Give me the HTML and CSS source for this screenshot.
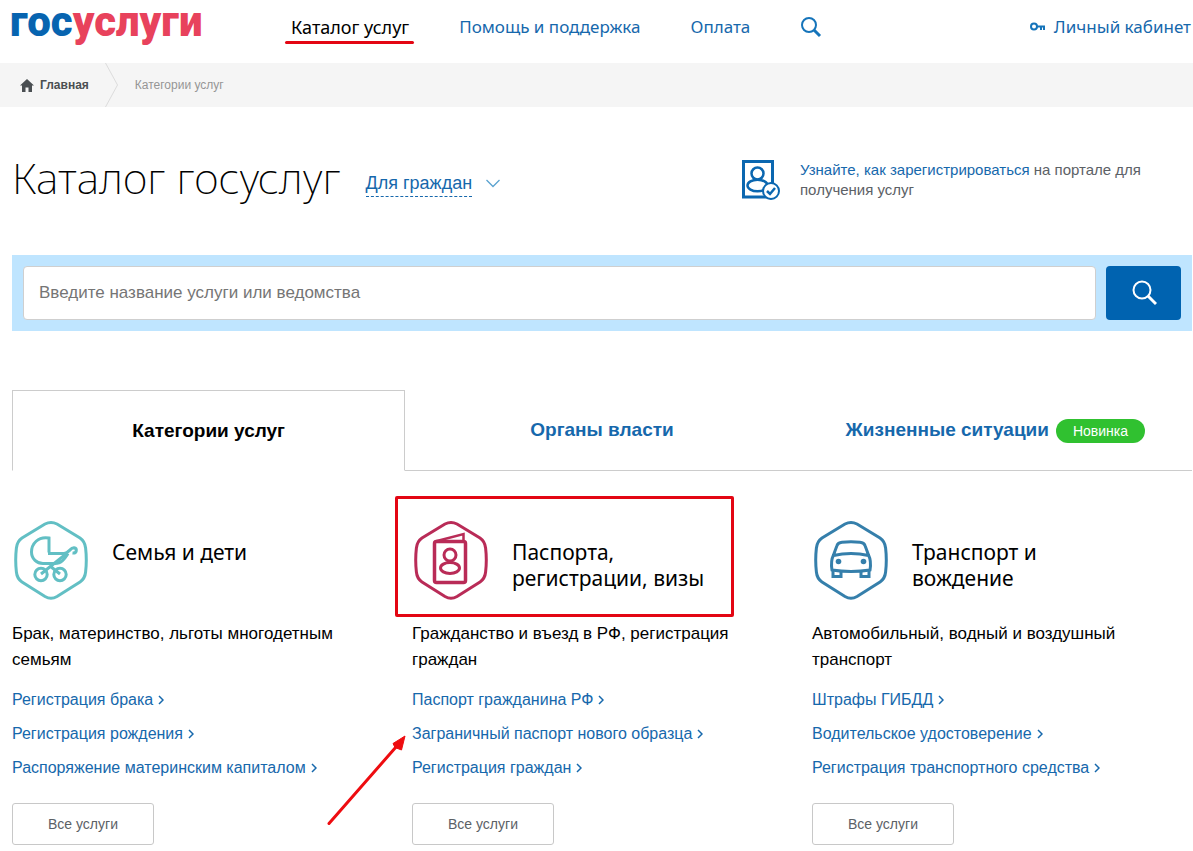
FILE: index.html
```html
<!DOCTYPE html>
<html lang="ru">
<head>
<meta charset="utf-8">
<meta name="viewport" content="width=device-width, initial-scale=1">
<title>Каталог госуслуг</title>
<link rel="stylesheet" href="styles.css">
</head>
<body>
<header class="header">
  <a class="logo" href="#"><span class="logo-blue">гос</span>услуги</a>
  <nav class="nav">
    <a class="nav-link nav-active" href="#">Каталог услуг</a>
    <a class="nav-link" href="#">Помощь и поддержка</a>
    <a class="nav-link" href="#">Оплата</a>
    <button class="nav-search" type="button" aria-label="Поиск">
      <svg width="22" height="22" viewBox="0 0 22 22" fill="none" stroke="#1574ba"><circle cx="9" cy="9" r="7" stroke-width="2"/><path d="M14 14l6 6" stroke-width="3"/></svg>
    </button>
  </nav>
  <a class="account" href="#">
    <svg width="16" height="10" viewBox="0 0 16 10" fill="none" stroke="#1574ba" stroke-width="2"><circle cx="4" cy="4.500" r="3"/><path d="M7 4.500h8M11 5v3M14 5v3"/></svg>
    Личный кабинет
  </a>
</header>

<nav class="crumbs" aria-label="Навигация">
  <a class="crumb-home" href="#">
    <svg width="14" height="13" viewBox="0 0 14 13" fill="#4a4f52"><path d="M7 0l7 6.600h-2V13H8.500V8.500h-3V13H2V6.600H0z"/></svg>
    Главная
  </a>
  <svg class="crumb-sep" width="14" height="44" viewBox="0 0 14 44" fill="none" stroke="#dcdcdc"><path d="M.5 0l12 22-12 22"/></svg>
  <span>Категории услуг</span>
</nav>

<main class="main">
  <div class="title-row">
    <h1 class="title">Каталог госуслуг</h1>
    <button class="audience" type="button">
      <span class="audience-text">Для граждан</span>
      <svg width="14" height="9" viewBox="0 0 14 9" fill="none" stroke="#5ba3d0" stroke-width="1.300"><path d="M.5 1L7 7.500 13.500 1"/></svg>
    </button>
    <div class="register">
      <svg width="38" height="40" viewBox="0 0 38 40" fill="none" stroke="#0b67b0" stroke-width="2.500">
        <rect x="1.500" y="1.500" width="29" height="35.500" stroke-width="3"/>
        <circle cx="15.500" cy="13.500" r="6"/>
        <ellipse cx="15.500" cy="25.500" rx="10" ry="5.800"/>
        <circle cx="29" cy="31" r="8" fill="#fff" stroke-width="2"/>
        <path d="M25 31l3 3 5-6"/>
      </svg>
      <p class="register-text"><a href="#">Узнайте, как зарегистрироваться</a> на портале для получения услуг</p>
    </div>
  </div>

  <form class="search">
    <input class="search-input" type="text" placeholder="Введите название услуги или ведомства" aria-label="Введите название услуги или ведомства">
    <button class="search-button" type="button" aria-label="Найти">
      <svg width="26" height="26" viewBox="0 0 26 26" fill="none" stroke="#fff"><circle cx="11" cy="10" r="8.500" stroke-width="2"/><path d="M17 16l8 8" stroke-width="3"/></svg>
    </button>
  </form>

  <div class="tabs">
    <a class="tab tab-active" href="#">Категории услуг</a>
    <a class="tab" href="#">Органы власти</a>
    <a class="tab" href="#">Жизненные ситуации <span class="badge">Новинка</span></a>
  </div>

  <div class="categories">
    <section class="category">
      <div class="category-head">
        <svg class="category-icon" width="80" height="80" viewBox="1 0 80 80" fill="none" stroke="#62bfc4" stroke-width="3">
          <path d="M34 4Q40 .800 46 4L69 18Q74 21.500 74.600 28Q76 40 74.600 52Q74 58.500 69 62L46 76.500Q40 80 34 76.500L11 62Q6 58.500 5.400 52Q4 40 5.400 28Q6 21.500 11 18Z"/>
          <path d="M38 32.500V18C27 16 20.500 24 20.500 32C20.500 39 26 43.500 32 43.500H44C51 43.500 54 38 57 33.500"/>
          <path d="M37 33.500H53C58 33.500 59 27.500 63 27.800C66.500 28.500 66 33.500 61.500 33"/>
          <path d="M30 54L55 34M39 46L49 54"/>
          <circle cx="30" cy="54.500" r="6.200"/><circle cx="49" cy="54.500" r="6.200"/>
        </svg>
        <h2 class="category-title">Семья и дети</h2>
      </div>
      <p class="category-text">Брак, материнство, льготы многодетным семьям</p>
      <ul class="links">
        <li><a href="#">Регистрация брака<svg class="chev" width="6" height="10" viewBox="0 0 6 10"><path d="M1 1l4 4-4 4"/></svg></a></li>
        <li><a href="#">Регистрация рождения<svg class="chev" width="6" height="10" viewBox="0 0 6 10"><path d="M1 1l4 4-4 4"/></svg></a></li>
        <li><a href="#">Распоряжение материнским капиталом<svg class="chev" width="6" height="10" viewBox="0 0 6 10"><path d="M1 1l4 4-4 4"/></svg></a></li>
      </ul>
      <button class="all" type="button">Все услуги</button>
    </section>

    <section class="category">
      <div class="category-head marked">
        <svg class="category-icon" width="80" height="80" viewBox="1 0 80 80" fill="none" stroke="#b92b57" stroke-width="3">
          <path d="M34 4Q40 .800 46 4L69 18Q74 21.500 74.600 28Q76 40 74.600 52Q74 58.500 69 62L46 76.500Q40 80 34 76.500L11 62Q6 58.500 5.400 52Q4 40 5.400 28Q6 21.500 11 18Z"/>
          <rect x="23.500" y="21.500" width="31" height="41" rx="2" stroke-width="3.500"/>
          <path d="M24 21.500L52.500 14V22" stroke-width="2.500"/>
          <circle cx="39" cy="35" r="6"/><ellipse cx="39" cy="48" rx="9.500" ry="5.500"/>
        </svg>
        <h2 class="category-title">Паспорта, регистрации, визы</h2>
      </div>
      <p class="category-text">Гражданство и въезд в РФ, регистрация граждан</p>
      <ul class="links">
        <li><a href="#">Паспорт гражданина РФ<svg class="chev" width="6" height="10" viewBox="0 0 6 10"><path d="M1 1l4 4-4 4"/></svg></a></li>
        <li class="pointed"><a href="#">Заграничный паспорт нового образца<svg class="chev" width="6" height="10" viewBox="0 0 6 10"><path d="M1 1l4 4-4 4"/></svg></a>
          <svg class="arrow" width="80" height="92" viewBox="0 0 80 92"><path d="M2 88.500L69 12" stroke="#ee0c10" stroke-width="3" stroke-linecap="round"/><path d="M78 1L66 8.500 68 12.500 74.500 15z" fill="#ee0c10" stroke="#ee0c10"/></svg></li>
        <li><a href="#">Регистрация граждан<svg class="chev" width="6" height="10" viewBox="0 0 6 10"><path d="M1 1l4 4-4 4"/></svg></a></li>
      </ul>
      <button class="all" type="button">Все услуги</button>
    </section>

    <section class="category">
      <div class="category-head">
        <svg class="category-icon" width="80" height="80" viewBox="1 0 80 80" fill="none" stroke="#357fab" stroke-width="3">
          <path d="M34 4Q40 .800 46 4L69 18Q74 21.500 74.600 28Q76 40 74.600 52Q74 58.500 69 62L46 76.500Q40 80 34 76.500L11 62Q6 58.500 5.400 52Q4 40 5.400 28Q6 21.500 11 18Z"/>
          <path d="M22.500 35L26 25.500Q27 22.500 31 22.200Q40 21.500 49 22.200Q53 22.500 54 25.500L57.500 35Q60.500 41 59 50Q40 53 21 50Q19.500 41 22.500 35ZM22.500 35.500Q40 31.500 57.500 35.500"/>
          <path d="M22 50V56.500H30V51M50 51V56.500H58V50"/>
          <circle cx="27.500" cy="41.500" r="2.800" fill="#357fab" stroke="none"/><circle cx="52.500" cy="41.500" r="2.800" fill="#357fab" stroke="none"/>
        </svg>
        <h2 class="category-title">Транспорт и вождение</h2>
      </div>
      <p class="category-text">Автомобильный, водный и воздушный транспорт</p>
      <ul class="links">
        <li><a href="#">Штрафы ГИБДД<svg class="chev" width="6" height="10" viewBox="0 0 6 10"><path d="M1 1l4 4-4 4"/></svg></a></li>
        <li><a href="#">Водительское удостоверение<svg class="chev" width="6" height="10" viewBox="0 0 6 10"><path d="M1 1l4 4-4 4"/></svg></a></li>
        <li><a href="#">Регистрация транспортного средства<svg class="chev" width="6" height="10" viewBox="0 0 6 10"><path d="M1 1l4 4-4 4"/></svg></a></li>
      </ul>
      <button class="all" type="button">Все услуги</button>
    </section>
  </div>
</main>
</body>
</html>
```
FILE: styles.css
```css
*, *::after { box-sizing: border-box; }
body {
  margin: 0;
  background: #fff;
  color: #000;
  font: 16px/26px "Liberation Sans", Arial, sans-serif;
}
a { color: #1668ac; text-decoration: none; }
button { border: 0; padding: 0; background: none; font: inherit; cursor: pointer; }
svg { display: block; flex: none; }
h1, h2, p, ul { margin: 0; padding: 0; font-weight: normal; }
ul { list-style: none; }

.header {
  display: flex;
  align-items: center;
  height: 63px;
  padding: 0 2px 9px 10px;
  font: 17px/26px "Noto Sans", "Open Sans", sans-serif;
}
.logo {
  width: 281px;
  color: #e8425c;
  font: 900 42px/48px Roboto, "Noto Sans", sans-serif;
  padding-bottom: 10px;
}
.logo-blue { color: #0764b0; }
.nav { display: flex; align-items: center; gap: 50px; }
.nav-active { position: relative; color: #000; font-size: 18px; }
.nav-active::after {
  content: "";
  position: absolute;
  left: -6px;
  right: -5px;
  bottom: -4px;
  height: 3px;
  border-radius: 2px;
  background: #e30613;
}
.account { display: flex; align-items: center; gap: 8px; margin-left: auto; }

.crumbs {
  display: flex;
  align-items: center;
  gap: 16px;
  height: 44px;
  padding-left: 20px;
  background: #f5f5f5;
  color: #959595;
  font-size: 12px;
}
.crumb-home {
  display: flex;
  align-items: center;
  gap: 6px;
  color: #4a4f52;
  font-weight: bold;
}

.main { padding: 48px 1px 0 12px; }
.title-row { display: flex; align-items: center; height: 50px; }
.title { font: 200 43px/46px "Noto Sans", Roboto, sans-serif; padding-bottom: 4px; }
.audience {
  display: flex;
  align-items: center;
  gap: 14px;
  margin-left: 25px;
  padding-top: 6px;
  color: #1668ac;
  font-size: 18px;
}
.audience-text { border-bottom: 1px dashed #1668ac; }
.register {
  display: flex;
  align-items: center;
  gap: 20px;
  width: 450px;
  margin-left: auto;
}
.register-text { width: 360px; color: #5c6166; font-size: 15px; line-height: 20px; }

.search {
  display: flex;
  gap: 10px;
  margin-top: 50px;
  padding: 11px;
  background: #bfe5ff;
}
.search-input {
  flex: 1;
  min-width: 0;
  height: 54px;
  padding: 0 15px;
  border: 1px solid #cfcfcf;
  border-radius: 4px;
  background: #fff;
  font: 17px "Liberation Sans", Arial, sans-serif;
}
.search-input::placeholder { color: #757575; }
.search-button {
  display: flex;
  align-items: center;
  justify-content: center;
  width: 75px;
  height: 54px;
  border-radius: 4px;
  background: #0063b0;
}

.tabs {
  display: grid;
  grid-template-columns: repeat(3, 1fr);
  margin-top: 59px;
}
.tab {
  display: flex;
  align-items: center;
  justify-content: center;
  gap: 7px;
  height: 81px;
  border-bottom: 1px solid #ccc;
  font-size: 19px;
  font-weight: bold;
}
.tab-active {
  border: 1px solid #ccc;
  border-bottom-color: #fff;
  color: #000;
}
.badge {
  margin-top: 2px;
  padding: 0 17px;
  border-radius: 12px;
  background: #30c130;
  color: #fff;
  font-size: 14px;
  font-weight: normal;
  line-height: 24px;
}

.categories {
  display: grid;
  grid-template-columns: repeat(3, 1fr);
  gap: 20px;
  margin-top: 49px;
}
.category-head { display: flex; gap: 20px; height: 101px; }
.marked { position: relative; }
.marked::after {
  content: "";
  position: absolute;
  left: -17px;
  top: -24px;
  width: 339px;
  height: 121px;
  border: 3px solid #e30613;
  border-radius: 2px;
}
.category-title {
  max-width: 220px;
  padding-top: 19px;
  font: 21px/26px "Noto Sans", "Open Sans", sans-serif;
}
.category-text { max-width: 340px; font-size: 17px; }
.links { margin-top: 10px; line-height: 34px; }
.chev {
  display: inline-block;
  margin-left: 5px;
  fill: none;
  stroke: #1668ac;
  stroke-width: 1.500;
}
.pointed { position: relative; }
.arrow { position: absolute; left: -85px; top: 18px; }
.all {
  width: 142px;
  height: 42px;
  margin-top: 18px;
  border: 1px solid #c8c8c8;
  border-radius: 3px;
  color: #5c6166;
  font-size: 14px;
}
```
